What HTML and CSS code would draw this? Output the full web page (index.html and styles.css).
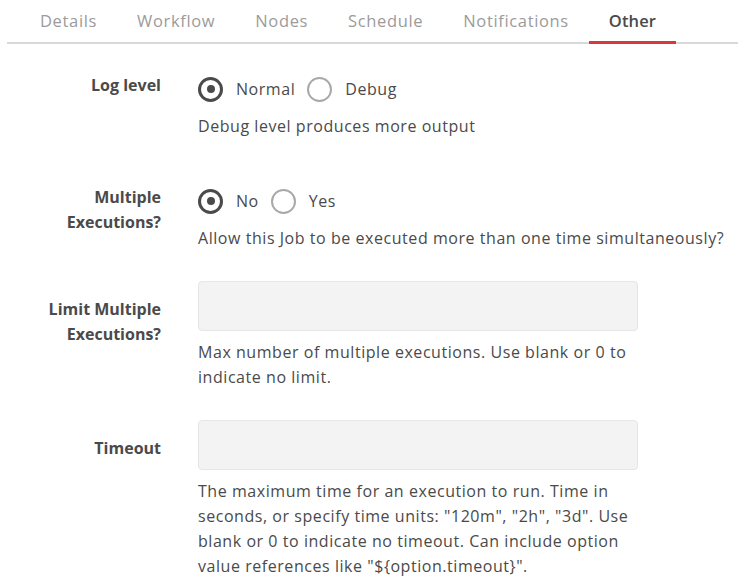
FILE: index.html
```html
<!DOCTYPE html>
<html>
<head>
<meta charset="utf-8">
<link rel="stylesheet" href="styles.css">
</head>
<body>
<nav class="tabs">
  <a class="tab">Details</a>
  <a class="tab">Workflow</a>
  <a class="tab">Nodes</a>
  <a class="tab">Schedule</a>
  <a class="tab">Notifications</a>
  <a class="tab active">Other</a>
</nav>
<form class="form">
  <div class="row">
    <label class="label">Log level</label>
    <div class="field">
      <div class="radios">
        <span class="radio checked"></span><span class="opt">Normal</span>
        <span class="radio"></span><span class="opt">Debug</span>
      </div>
      <p class="help">Debug level produces more output</p>
    </div>
  </div>
  <div class="row">
    <label class="label">Multiple<br>Executions?</label>
    <div class="field">
      <div class="radios">
        <span class="radio checked"></span><span class="opt">No</span>
        <span class="radio"></span><span class="opt">Yes</span>
      </div>
      <p class="help">Allow this Job to be executed more than one time simultaneously?</p>
    </div>
  </div>
  <div class="row">
    <label class="label">Limit Multiple<br>Executions?</label>
    <div class="field narrow">
      <input class="input" type="text">
      <p class="help">Max number of multiple executions. Use blank or 0 to indicate no limit.</p>
    </div>
  </div>
  <div class="row">
    <label class="label">Timeout</label>
    <div class="field narrow">
      <input class="input" type="text">
      <p class="help">The maximum time for an execution to run. Time in seconds, or specify time units: "120m", "2h", "3d". Use blank or 0 to indicate no timeout. Can include option value references like "${option.timeout}".</p>
    </div>
  </div>
</form>
</body>
</html>
```
FILE: styles.css
```css
* { box-sizing: border-box; }
html, body { margin: 0; padding: 0; background: #fff; }
body {
  font-family: "Open Sans", "Noto Sans", sans-serif;
  font-size: 16px;
  line-height: 25px;
  color: #4a4a4a;
  letter-spacing: 0.55px;
}
.tabs {
  display: flex;
  margin-left: 7px;
  padding-left: 13px;
  border-bottom: 2px solid #d9d9d9;
  height: 44px;
}
.tab {
  padding: 8px 20px 0;
  font-size: 16.5px;
  color: #9b9b9b;
  height: 44px;
  margin-bottom: -2px;
  border-bottom: 3px solid transparent;
  letter-spacing: 0.65px;
}
.tab.active {
  color: #4a4a4a;
  font-weight: 600;
  border-bottom-color: #d9363e;
  letter-spacing: 0.1px;
}
.form {
  padding-top: 13px;
  display: flex;
  flex-direction: column;
  gap: 30px;
}
.row {
  display: grid;
  grid-template-columns: 161px auto;
  column-gap: 37px;
  align-items: start;
}
.label {
  text-align: right;
  font-weight: 700;
  padding-top: 16px;
  letter-spacing: 0;
}
.field { display: flex; flex-direction: column; }
.field.narrow { width: 440px; }
.radios {
  display: flex;
  align-items: center;
  height: 32px;
  margin-top: 16px;
}
.radio {
  width: 25px;
  height: 25px;
  border-radius: 50%;
  border: 2px solid #a8a8a8;
  display: flex;
  align-items: center;
  justify-content: center;
  margin-right: 13px;
}
.radio.checked {
  border: 3px solid #4a4a4a;
}
.radio.checked::after {
  content: "";
  width: 8px;
  height: 8px;
  border-radius: 50%;
  background: #4a4a4a;
}
.opt { margin-right: 12px; }
.help { margin: 9px 0 0; }
.input {
  width: 440px;
  height: 50px;
  background: #f3f3f3;
  border: 1px solid #e6e6e6;
  border-radius: 4px;
  font: inherit;
}
```
